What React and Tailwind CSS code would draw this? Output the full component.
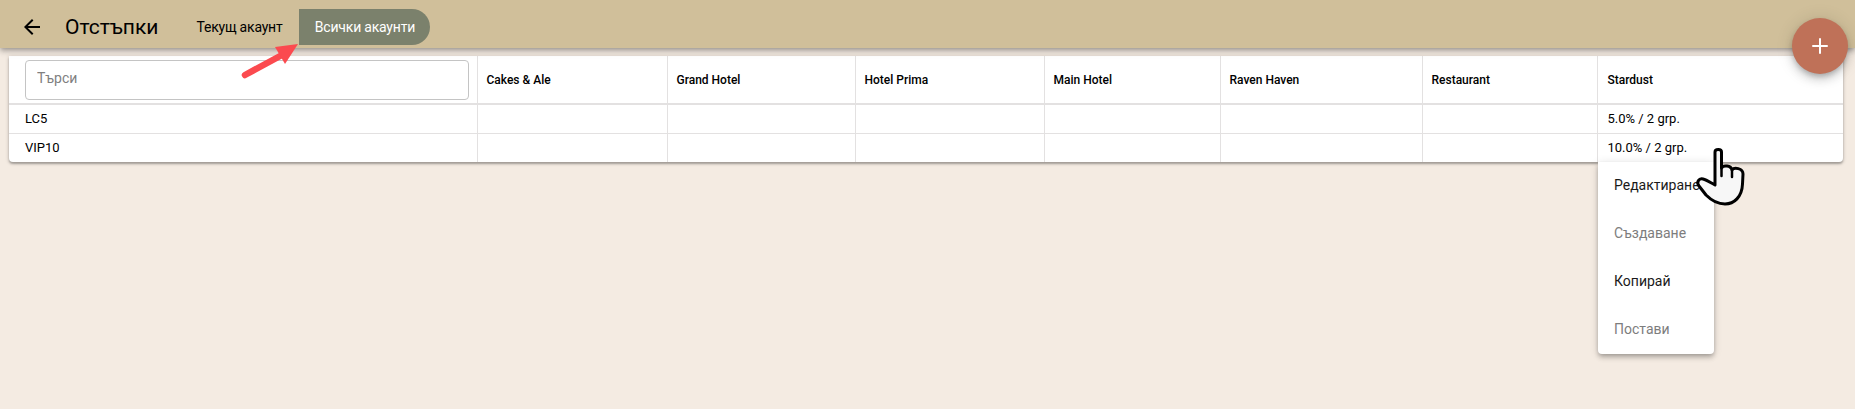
import React from 'react';
import { Plus } from 'lucide-react';

const hotels = [
  { name: 'Cakes & Ale', width: 'w-[190px]', pad: 'px-[9px]' },
  { name: 'Grand Hotel', width: 'w-[188px]', pad: 'px-[9px]' },
  { name: 'Hotel Prima', width: 'w-[189px]', pad: 'px-[9px]' },
  { name: 'Main Hotel', width: 'w-[176px]', pad: 'px-[9px]' },
  { name: 'Raven Haven', width: 'w-[202px]', pad: 'px-[9px]' },
  { name: 'Restaurant', width: 'w-[175px]', pad: 'px-[9px]' },
  { name: 'Stardust', width: 'w-[246px]', pad: 'px-[10px]' },
];

const rows = [
  { code: 'LC5', stardust: '5.0% / 2 grp.' },
  { code: 'VIP10', stardust: '10.0% / 2 grp.' },
];

const menuItems = [
  { label: 'Редактиране', disabled: false },
  { label: 'Създаване', disabled: true },
  { label: 'Копирай', disabled: false },
  { label: 'Постави', disabled: true },
];

const Header = () => (
  <header className="relative z-10 flex h-12 items-center bg-[#d0bf9a] pl-5 pt-[6px] shadow-[0_2px_4px_-1px_rgba(0,0,0,0.2),0_4px_5px_0_rgba(0,0,0,0.14),0_1px_10px_0_rgba(0,0,0,0.12)]">
    <svg className="h-6 w-6 fill-black" viewBox="0 0 24 24">
      <path d="M20 11H7.83l5.59-5.59L12 4l-8 8 8 8 1.41-1.41L7.83 13H20v-2z" />
    </svg>
    <h1 className="ml-[21px] text-[21px] leading-6 text-black">Отстъпки</h1>
    <div className="ml-[26px] flex h-9 items-center text-sm tracking-[-0.2px]">
      <button className="flex h-9 w-[115px] items-center pl-3 text-black">Текущ акаунт</button>
      <button className="flex h-9 w-[131px] items-center justify-center rounded-r-[18px] bg-[#7b816c] text-white">Всички акаунти</button>
    </div>
  </header>
);

const DiscountTable = () => (
  <div className="mx-[9px] mt-2 w-[1834px] overflow-hidden rounded-b bg-white shadow-[0_2px_2px_0_rgba(0,0,0,0.24),0_1px_4px_0_rgba(0,0,0,0.2)]">
    <table className="w-full table-fixed border-collapse text-[13px] text-black">
      <thead>
        <tr className="h-12 border-b-2 border-[#e3e1e1]">
          <th className="w-[468px] border-r border-[#e3e1e1] pl-4 pr-2 font-normal">
            <input
              className="block h-10 w-full rounded border border-[#c4c4c4] px-[11px] pb-1 text-sm outline-none placeholder:text-[#808080]"
              placeholder="Търси"
            />
          </th>
          {hotels.map((h) => (
            <th key={h.name} className={`${h.width} ${h.pad} border-r border-[#e3e1e1] text-left text-xs font-medium last:border-r-0`}>
              {h.name}
            </th>
          ))}
        </tr>
      </thead>
      <tbody>
        {rows.map((r, i) => (
          <tr key={r.code} className={i === 0 ? 'h-[29px] border-b border-[#e3e1e1]' : 'h-[29px]'}>
            <td className="border-r border-[#e3e1e1] pl-4">{r.code}</td>
            {hotels.map((h) => (
              <td key={h.name} className={`${h.pad} border-r border-[#e3e1e1] last:border-r-0`}>
                {h.name === 'Stardust' ? r.stardust : ''}
              </td>
            ))}
          </tr>
        ))}
      </tbody>
    </table>
  </div>
);

const ContextMenu = () => (
  <div className="absolute left-[1598px] top-[162px] z-20 w-[116px] rounded-b bg-white shadow-[0_2px_4px_-1px_rgba(0,0,0,0.2),0_4px_5px_0_rgba(0,0,0,0.14),0_1px_10px_0_rgba(0,0,0,0.12)]">
    {menuItems.map((item) => (
      <div
        key={item.label}
        className={`flex h-12 items-center whitespace-nowrap pb-[2px] pl-4 text-sm ${item.disabled ? 'text-[#7d7d7d]' : 'text-[#1a1a1a]'}`}
      >
        {item.label}
      </div>
    ))}
  </div>
);

// red annotation arrow pointing at the active tab
const RedArrow = () => (
  <svg className="absolute left-[236px] top-[40px] z-20" width="68" height="44" viewBox="0 0 68 44">
    <path d="M9 35 L46 15" stroke="#fb4a4f" strokeWidth="6.5" strokeLinecap="round" fill="none" />
    <path d="M62 4 L39 7 L49 24 Z" fill="#fb4a4f" />
  </svg>
);

// pointer hand cursor annotation
const HandCursor = () => (
  <svg className="absolute left-[1690px] top-[140px] z-30" width="60" height="70" viewBox="0 0 60 70">
    <path
      d="M25 12 C25 8.5 31.5 8.5 31.5 12 L31.5 28 C33 25 41 25 42 30 C44 27 53 28 53 34 L52.5 44 C52 57 44 64 35 64 C27 64 21 60 16 55 L9 46 C6 42 9 38 13 39 C17 40 21 43 25 45 Z"
      fill="#f7f7f7"
      stroke="#000"
      strokeWidth="3"
      strokeLinejoin="round"
    />
    <path d="M31.5 28 L31.5 36 M42 30 L42 37" stroke="#000" strokeWidth="2.5" fill="none" strokeLinecap="round" />
  </svg>
);

export default function App() {
  return (
    <div className="relative h-[409px] w-[1855px] overflow-hidden bg-[#f4ebe2] font-['Roboto',sans-serif]">
      <Header />
      <DiscountTable />
      <ContextMenu />
      <RedArrow />
      <HandCursor />
      <button className="absolute left-[1792px] top-[18px] z-20 flex h-14 w-14 items-center justify-center rounded-full bg-[#bf7158] text-white shadow-[0_3px_5px_-1px_rgba(0,0,0,0.2),0_6px_10px_0_rgba(0,0,0,0.14),0_1px_18px_0_rgba(0,0,0,0.12)]">
        <Plus className="h-6 w-6" strokeWidth={2} />
      </button>
    </div>
  );
}
